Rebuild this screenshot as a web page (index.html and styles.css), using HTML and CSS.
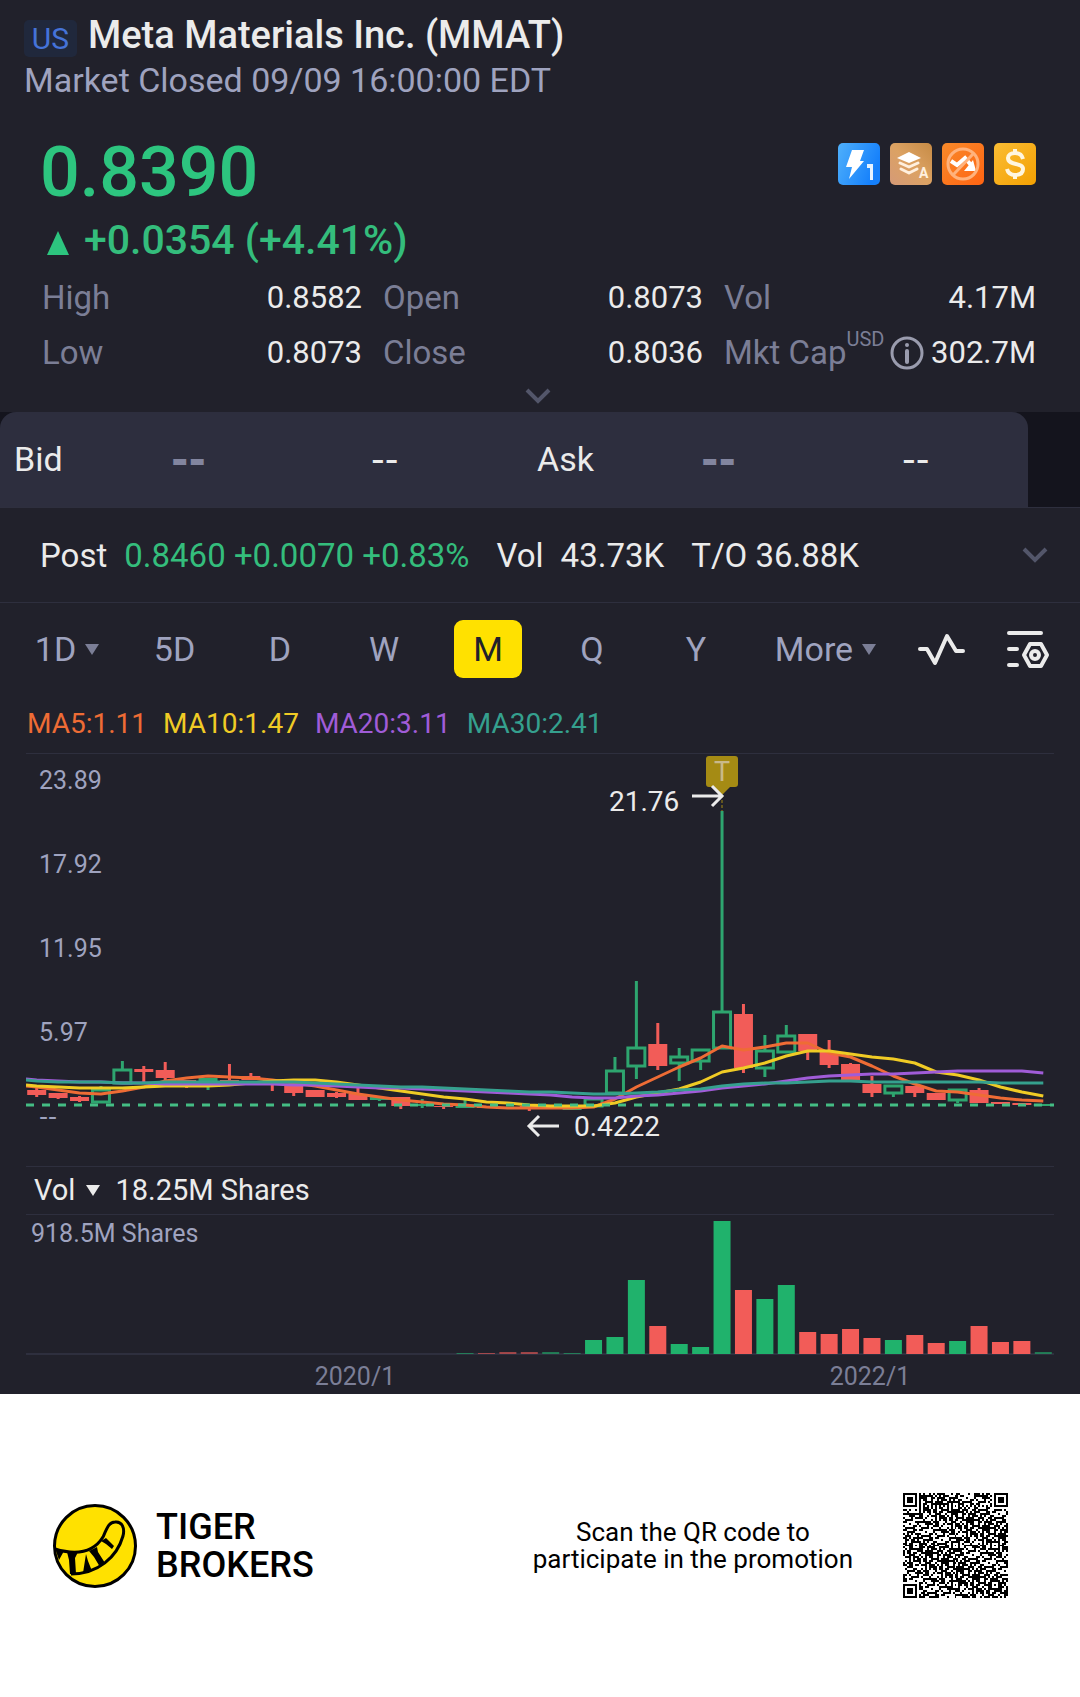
FILE: index.html
```html
<!DOCTYPE html>
<html lang="en">
<head>
  <meta charset="UTF-8" />
  <meta name="viewport" content="width=device-width, initial-scale=1.0"/>
  <title>Meta Materials Inc. (MMAT)</title>
  <link rel="stylesheet" href="styles.css">
</head>
<body>
<main class="quote">
  <header class="header">
    <div class="title">
      <span class="market">US</span>
      <h1>Meta Materials Inc. (MMAT)</h1>
    </div>
    <p class="status">Market Closed 09/09 16:00:00 EDT</p>
  </header>

  <section class="summary">
    <div class="price-row">
      <div class="price">0.8390</div>
      <div class="badges">
        <svg viewBox="0 0 42 42">
          <defs>
            <linearGradient id="blue" x1="0" y1="0" x2="1" y2="0.4"><stop offset="0" stop-color="#4fb0fb"/><stop offset="1" stop-color="#1580fb"/></linearGradient>
            <linearGradient id="tan" x1="0" y1="1" x2="1" y2="0"><stop offset="0" stop-color="#d59a78"/><stop offset="0.5" stop-color="#dca263"/><stop offset="1" stop-color="#c78b45"/></linearGradient>
            <linearGradient id="orange" x1="0" y1="0" x2="1" y2="1"><stop offset="0" stop-color="#f88a2a"/><stop offset="1" stop-color="#ff6412"/></linearGradient>
            <linearGradient id="gold" x1="0" y1="0" x2="1" y2="1"><stop offset="0" stop-color="#fbbd34"/><stop offset="1" stop-color="#f3a002"/></linearGradient>
          </defs>
          <rect width="42" height="42" rx="5" fill="url(#blue)"/>
          <path d="M14 7h12l-4 11h4L11 36l3-12H8z" fill="#fff"/>
          <path d="M29 21h6v16h-3V25h-3z" fill="#e6f3ff"/>
        </svg>
        <svg viewBox="0 0 42 42">
          <rect width="42" height="42" rx="5" fill="url(#tan)"/>
          <path d="M7 15l12-6 12 6-12 5z" fill="#fff"/>
          <path d="M10 20l9 4 9-4M11 26l8 4 8-4" fill="none" stroke="#fff0df" stroke-width="3" stroke-linecap="round" stroke-linejoin="round"/>
          <text x="29" y="35" class="badge-letter">A</text>
        </svg>
        <svg viewBox="0 0 42 42">
          <rect width="42" height="42" rx="5" fill="url(#orange)"/>
          <path d="M9 18l6 4 8-7 6 7" fill="none" stroke="#fff" stroke-width="4"/>
          <path d="M31 17l3 11H22z" fill="#fff"/>
          <circle cx="21" cy="21" r="15" fill="none" stroke="#ffb27c" stroke-width="3"/>
          <path d="M11 32l20-21" stroke="#ffb27c" stroke-width="3"/>
        </svg>
        <svg viewBox="0 0 42 42">
          <rect width="42" height="42" rx="5" fill="url(#gold)"/>
          <path d="M29 16c-1-4-4-6-8-6-4 0-7 2-7 5 0 8 15 4 15 11 0 4-3 6-8 6-4 0-7-2-8-6M21 6v5M21 31v5" fill="none" stroke="#fff6df" stroke-width="4"/>
        </svg>
      </div>
    </div>
    <div class="change"><span class="up"></span>+0.0354 (+4.41%)</div>
    <dl class="stats">
      <div><dt>High</dt><dd>0.8582</dd></div>
      <div><dt>Open</dt><dd>0.8073</dd></div>
      <div><dt>Vol</dt><dd>4.17M</dd></div>
      <div><dt>Low</dt><dd>0.8073</dd></div>
      <div><dt>Close</dt><dd>0.8036</dd></div>
      <div>
        <dt>Mkt Cap<sup>USD</sup></dt>
        <dd>
          <svg class="info" viewBox="0 0 36 36">
            <circle cx="18" cy="18" r="15" fill="none" stroke="#9a9cae" stroke-width="3"/>
            <path d="M18 16v11" stroke="#9a9cae" stroke-width="4" stroke-linecap="round"/>
            <circle cx="18" cy="10" r="2" fill="#9a9cae"/>
          </svg>302.7M
        </dd>
      </div>
    </dl>
    <button class="expand" aria-label="Show more">
      <svg class="chevron" viewBox="0 0 26 16"><path d="M2 2l11 11L24 2"/></svg>
    </button>
  </section>

  <section class="depth">
    <div class="depth-bar">
      <span>Bid</span><span class="dash empty">--</span><span class="dash">--</span>
      <span>Ask</span><span class="dash empty">--</span><span class="dash">--</span>
    </div>
  </section>

  <section class="post">
    <span>Post</span>
    <span class="green">0.8460 +0.0070 +0.83%</span>
    <span>Vol</span><span class="amount">43.73K</span>
    <span>T/O 36.88K</span>
    <button class="post-toggle" aria-label="Toggle post market">
      <svg class="chevron" viewBox="0 0 26 16"><path d="M2 2l11 11L24 2"/></svg>
    </button>
  </section>

  <nav class="tabs">
    <button>1D<i class="down"></i></button>
    <button>5D</button>
    <button>D</button>
    <button>W</button>
    <button class="active">M</button>
    <button>Q</button>
    <button>Y</button>
    <button>More<i class="down"></i></button>
    <button aria-label="Indicators">
      <svg class="tool-icon" viewBox="0 0 48 44">
        <path d="M3 22h7l8 14L30 9l9 15h7"/>
      </svg>
    </button>
    <button aria-label="Chart settings">
      <svg class="tool-icon" viewBox="0 0 48 44">
        <path d="M5 6h32M5 22h8M5 38h8"/>
        <path d="M26 17h11l6 11-6 11H26l-6-11z"/>
        <circle cx="31" cy="28" r="4"/>
      </svg>
    </button>
  </nav>

  <section class="chart">
    <div class="legend">
      <span class="ma5">MA5:1.11</span>
      <span class="ma10">MA10:1.47</span>
      <span class="ma20">MA20:3.11</span>
      <span class="ma30">MA30:2.41</span>
    </div>
    <svg id="candles" class="plot" viewBox="0 0 1028 412"></svg>
    <div class="vol-head">Vol<i class="down"></i>18.25M Shares</div>
    <svg id="volume" class="plot" viewBox="0 0 1028 179"></svg>
  </section>
</main>

<footer class="footer">
  <div class="brand">
    <svg viewBox="0 0 84 84">
      <circle cx="42" cy="42" r="40.500" fill="#ffe100" stroke="#000" stroke-width="3"/>
      <path d="M2 45C22 51 40 49 50 33C54 24 56 18 62 18C69 17 72 24 70 32C64 53 45 70 18 70" fill="none" stroke="#000" stroke-width="3"/>
      <path d="M2 44l9 3-5 9zM14 48h11l-3 6 1 16h-6l-1-14zM33 50l2 7 4 10-9 2zM36 47l8-4 1 5 7 11-5 4-6-10zM48 37l5-3 8 8-2 3-6-5z" fill="#000"/>
    </svg>
    <div class="brand-name">TIGER<br>BROKERS</div>
  </div>
  <p class="scan">Scan the QR code to<br>participate in the promotion</p>
  <svg id="qr" class="qr" viewBox="0 0 53 53" shape-rendering="crispEdges"></svg>
</footer>
<script src="script.js"></script>
</body>
</html>
```

FILE: styles.css
```css
* { box-sizing: border-box; }
body {
  margin: 0;
  font-family: Roboto, sans-serif;
  background-color: #fff;
  color: #ebebeb;
}
h1, p, dl, dd { margin: 0; }
button {
  background: none;
  border: none;
  padding: 0;
  color: inherit;
  font: inherit;
  cursor: pointer;
}
svg { display: block; }
.quote {
  background-color: #21212b;
}
.header {
  padding: 13px 24px 0;
}
.title {
  display: flex;
  align-items: center;
  gap: 11px;
  height: 44px;
}
.market {
  background-color: #20283c;
  color: #4573d8;
  border-radius: 5px;
  width: 53px;
  line-height: 37px;
  margin-top: 6px;
  font-size: 30px;
  text-align: center;
}
h1 {
  font-size: 38px;
  font-weight: 500;
  white-space: nowrap;
}
.status {
  color: #9fa3bf;
  font-size: 34px;
  line-height: 47px;
}
.summary {
  padding: 26px 44px 0 40px;
}
.price-row {
  display: flex;
  justify-content: space-between;
}
.price {
  color: #2dc57f;
  font-size: 70px;
  font-weight: 500;
  line-height: 84px;
}
.badges {
  display: flex;
  gap: 10px;
  margin-top: 13px;
}
.badges svg {
  width: 42px;
  height: 42px;
}
.badge-letter {
  font-size: 14px;
  font-weight: 700;
  fill: #fff0df;
}
.change {
  display: flex;
  align-items: center;
  color: #34bd7c;
  font-size: 41px;
  font-weight: 500;
  line-height: 52px;
}
.up {
  border: 11px solid transparent;
  border-top: none;
  border-bottom: 24px solid #2dc57f;
  margin: 6px 15px 0 7px;
}
.stats {
  display: grid;
  grid-template-columns: 320fr 320fr 312fr;
  column-gap: 21px;
  font-size: 33px;
  line-height: 55px;
  padding: 4px 0 0 2px;
}
.stats div {
  display: flex;
  justify-content: space-between;
  white-space: nowrap;
}
.stats dt { color: #7b7e96; }
.stats dd {
  display: flex;
  align-items: center;
  gap: 6px;
  font-size: 31px;
}
.stats sup {
  font-size: 20px;
  line-height: 0;
  vertical-align: 18px;
}
.info {
  width: 36px;
  height: 36px;
}
.chevron {
  width: 26px;
  height: 16px;
  fill: none;
  stroke: #53566a;
  stroke-width: 4;
}
.expand {
  display: block;
  margin: 0 auto;
  padding: 8px 0;
}
.depth {
  background-color: #14141d;
  border-bottom: 1px solid #2e2f3e;
  padding-right: 52px;
}
.depth-bar {
  display: grid;
  grid-template-columns: 157fr 200fr 166fr 164fr 201fr 126fr;
  background-color: #2d2e3e;
  border-radius: 16px 16px 0 0;
  padding-left: 14px;
  font-size: 34px;
  line-height: 95px;
}
.dash {
  font-family: "DejaVu Sans", sans-serif;
  font-size: 38px;
}
.empty {
  color: #82859f;
  font-size: 42px;
  font-weight: 700;
}
.post {
  display: flex;
  align-items: center;
  gap: 17px;
  height: 95px;
  border-bottom: 1px solid #2e2f3e;
  padding: 0 32px 0 40px;
  font-size: 33px;
}
.green {
  color: #34bd7c;
  margin-right: 10px;
}
.amount { margin-right: 10px; }
.post-toggle { margin-left: auto; }
.tabs {
  display: grid;
  grid-template-columns: 108fr 107fr repeat(5, 104fr) 155fr 76fr 98fr;
  align-items: center;
  justify-items: center;
  padding: 17px 3px 17px 13px;
  color: #9fa3bf;
  font-size: 34px;
}
.tabs button {
  display: flex;
  align-items: center;
  justify-content: center;
  height: 58px;
}
.tabs .active {
  background-color: #ffe100;
  border-radius: 9px;
  color: #21212b;
  width: 68px;
}
.down {
  border: 7px solid transparent;
  border-bottom: none;
  border-top: 11px solid #7b7e96;
  margin-left: 9px;
}
.tool-icon {
  width: 48px;
  height: 44px;
  fill: none;
  stroke: #ebebeb;
  stroke-width: 4;
  stroke-linecap: round;
  stroke-linejoin: round;
}
.chart {
  padding: 0 26px;
}
.legend {
  display: flex;
  gap: 16px;
  padding: 6px 1px;
  font-size: 28px;
  line-height: 46px;
}
.ma5 { color: #ee6c35; }
.ma10 { color: #f0cb25; }
.ma20 { color: #a05cd8; }
.ma30 { color: #35a08e; }
.plot {
  width: 100%;
  border-top: 1px solid #2e2f3e;
}
.vol-head {
  display: flex;
  align-items: center;
  border-top: 1px solid #2e2f3e;
  padding-left: 8px;
  font-size: 29px;
  line-height: 47px;
}
.vol-head .down {
  border-top-color: #ebebeb;
  margin: 0 15px 0 11px;
}
.axis {
  fill: #9fa3bf;
  font-size: 25px;
}
.axis-empty {
  font-family: "DejaVu Sans", sans-serif;
}
.date {
  fill: #7b7e96;
  font-size: 25px;
  text-anchor: middle;
}
.note {
  fill: #ebebeb;
  font-size: 28px;
}
.flag {
  fill: #c9b98a;
  font-size: 27px;
  text-anchor: middle;
}
.footer {
  display: flex;
  align-items: center;
  color: #000;
  padding: 99px 72px 98px 53px;
}
.brand {
  display: flex;
  align-items: center;
  gap: 19px;
}
.brand svg {
  width: 84px;
  height: 84px;
}
.brand-name {
  font-size: 36px;
  font-weight: 500;
  line-height: 38px;
}
.scan {
  margin-left: auto;
  margin-right: 50px;
  font-size: 26px;
  line-height: 27px;
  text-align: center;
}
.qr {
  width: 105px;
  height: 105px;
}
```

FILE: script.js
```js
const GREEN = '#2ea56f';
const RED = '#f25c58';
const STEP = 1028 / 48;
const mid = i => STEP * (i + 0.5);

// colour, high, body top, body bottom, low
const candles = [
  ['r',333,336,341,343], ['r',339,339,344,345], ['r',342,343,347,348], ['g',332,335,349,349],
  ['g',307,315,330,330], ['r',312,315,318,328], ['r',308,316,324,326], ['r',326,326,330,334],
  ['g',324,324,328,336], ['r',310,326,329,329], ['r',319,322,326,326], ['r',326,326,329,337],
  ['r',331,331,339,342], ['r',336,336,343,343], ['r',338,339,343,344], ['r',333,340,346,346],
  ['g',343,343,346,347], ['r',343,343,352,355], ['g',345,350,352,354], ['r',350,352,353,355],
  ['g',345,350,354,354], ['r',352,352,354,354], ['r',353,353,355,355], ['r',352,352,355,357],
  ['r',353,353,355,355], ['g',353,354,356,356], ['g',344,344,353,353], ['g',303,316,340,340],
  ['g',227,293,313,325], ['r',269,290,312,316], ['g',294,302,310,327], ['g',295,295,308,316],
  ['g',57,257,295,295], ['r',250,260,314,319], ['g',281,296,315,323], ['g',271,281,299,299],
  ['r',280,280,297,306], ['r',286,297,311,314], ['r',309,310,326,326], ['r',322,330,339,343],
  ['g',331,331,340,343], ['r',332,332,339,343], ['r',339,339,346,346], ['g',335,335,347,349],
  ['r',334,336,349,349], ['r',348,348,350,350], ['r',349,349,351,351], ['g',350,350,352,352]
];

const averages = [
  ['#ee6c35', [333,336,339,340,337,333,327,324,322,323,324,326,329,332,336,340,343,346,348,350,351,353,354,354,354,354,353,345,333,323,313,304,292,296,293,289,289,299,303,312,322,330,337,338,341,344,346,347]],
  ['#f0cb25', [332,333,334,334,334,333,332,332,332,331,329,327,326,326,328,331,334,337,340,343,345,348,349,351,352,352,352,349,343,339,335,328,318,314,309,302,297,297,300,303,305,309,318,321,326,333,338,342]],
  ['#a05cd8', [326,327,328,328,329,329,330,330,330,330,330,330,331,331,332,333,334,334,335,336,337,338,339,340,341,343,344,344,342,341,339,337,334,332,330,327,324,322,321,320,320,319,318,317,317,317,317,319]],
  ['#35a08e', [327,328,328,328,329,329,328,328,328,328,328,328,328,329,330,331,332,333,333,334,335,336,337,338,338,339,340,340,339,338,336,335,332,330,329,329,328,327,327,328,328,328,328,328,328,329,329,329]]
];

// colour and bar height, from the 21st month on
const volumes = [
  ['g',1], ['r',1], ['r',2], ['r',2], ['g',2], ['g',1], ['g',14], ['g',17], ['g',74], ['r',28],
  ['g',10], ['g',7], ['g',133], ['r',64], ['g',55], ['g',69], ['r',22], ['r',20], ['r',25], ['r',16],
  ['g',14], ['r',19], ['r',11], ['g',13], ['r',28], ['r',12], ['r',13], ['g',2]
];

function drawCandles() {
  let out = '';
  ['23.89', '17.92', '11.95', '5.97'].forEach((label, i) => {
    out += `<text class="axis" x="13" y="${35 + i * 84}">${label}</text>`;
  });
  out += '<text class="axis axis-empty" x="13" y="371">--</text>';
  candles.forEach(([dir, high, top, bottom, low], i) => {
    const x = mid(i);
    const color = dir === 'g' ? GREEN : RED;
    out += `<path d="M${x} ${high}V${top}M${x} ${bottom}V${low}" stroke="${color}" stroke-width="3"/>`;
    if (dir === 'g' && bottom - top > 4) {
      out += `<rect x="${x - 8.5}" y="${top + 1}" width="17" height="${bottom - top - 2}" fill="none" stroke="${color}" stroke-width="3"/>`;
    } else {
      out += `<rect x="${x - 9.5}" y="${top}" width="19" height="${bottom - top}" fill="${color}"/>`;
    }
  });
  averages.forEach(([color, ys]) => {
    const points = ys.map((y, i) => `${mid(i)},${y}`).join(' ');
    out += `<polyline points="0,${ys[0] - 1} ${points}" fill="none" stroke="${color}" stroke-width="3" stroke-linejoin="round"/>`;
  });
  out += `<path d="M0 351H1028" stroke="#44bd84" stroke-width="3" stroke-dasharray="8 8"/>`;
  out += `<path d="M683 2h26a3 3 0 0 1 3 3v25a3 3 0 0 1-3 3h-5l-8 8-8-8h-5a3 3 0 0 1-3-3V5a3 3 0 0 1 3-3z" fill="#a58b14"/>`;
  out += `<text class="flag" x="696" y="27">T</text>`;
  out += `<path d="M696 41V57" stroke="#a58b14" stroke-dasharray="3 2"/>`;
  out += `<path d="M666 42h30M686 32l10 10-10 10" fill="none" stroke="#ebebeb" stroke-width="3"/>`;
  out += `<text class="note" x="583" y="57">21.76</text>`;
  out += `<path d="M533 372h-30M513 362l-10 10 10 10" fill="none" stroke="#ebebeb" stroke-width="3"/>`;
  out += `<text class="note" x="548" y="382">0.4222</text>`;
  document.getElementById('candles').innerHTML = out;
}

function drawVolume() {
  let out = '<path d="M0 139H1028" stroke="#2e2f3e" stroke-width="2"/>';
  out += '<text class="axis" x="5" y="27">918.5M Shares</text>';
  volumes.forEach(([dir, h], i) => {
    const color = dir === 'g' ? '#20b26c' : '#f25c58';
    out += `<rect x="${mid(i + 20) - 8.5}" y="${139 - h}" width="17" height="${h}" fill="${color}"${h < 3 ? ' opacity="0.6"' : ''}/>`;
  });
  out += '<text class="date" x="329" y="170">2020/1</text>';
  out += '<text class="date" x="844" y="170">2022/1</text>';
  document.getElementById('volume').innerHTML = out;
}

function drawQr() {
  const size = 53;
  let seed = 9;
  let d = '';
  const finders = [[3, 3], [size - 4, 3], [3, size - 4]];
  const aligns = [[26, 6], [6, 26], [26, 26], [46, 26], [26, 46], [46, 46]];
  for (let y = 0; y < size; y++) {
    for (let x = 0; x < size; x++) {
      seed = (seed * 1103515245 + 12345) % 2147483648;
      let dark = seed / 2147483648 > 0.5;
      if (x === 6 || y === 6) dark = (x + y) % 2 === 0;
      aligns.forEach(([cx, cy]) => {
        const r = Math.max(Math.abs(x - cx), Math.abs(y - cy));
        if (r <= 2) dark = r !== 1;
      });
      finders.forEach(([cx, cy]) => {
        const r = Math.max(Math.abs(x - cx), Math.abs(y - cy));
        if (r <= 4) dark = r !== 2 && r !== 4;
      });
      if (dark) d += `M${x} ${y}h1v1h-1z`;
    }
  }
  document.getElementById('qr').innerHTML = `<path d="${d}" fill="#000"/>`;
}

drawCandles();
drawVolume();
drawQr();
```
